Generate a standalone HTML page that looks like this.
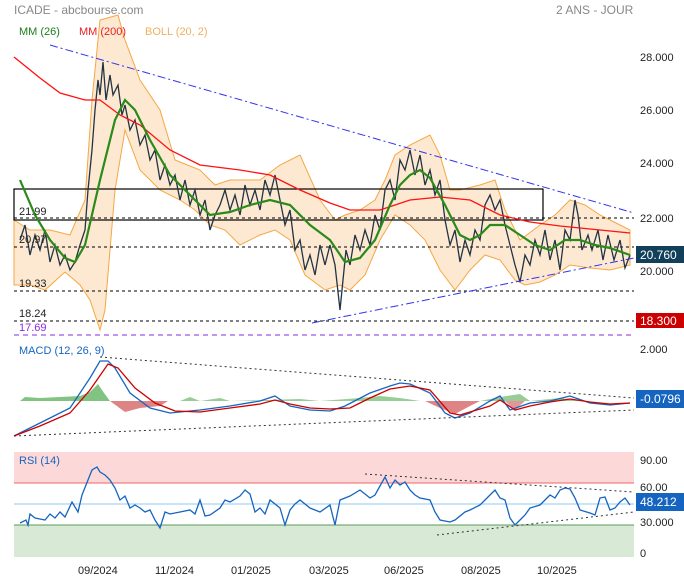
<!DOCTYPE html>
<html><head><meta charset="utf-8"><style>
body{margin:0;background:#fff;width:684px;height:580px;overflow:hidden;font-family:"Liberation Sans",sans-serif}
svg text{font-family:"Liberation Sans",sans-serif}
</style></head><body>
<svg width="684" height="580" xmlns="http://www.w3.org/2000/svg">
<text x="14" y="14" font-size="12" fill="#888">ICADE - abcbourse.com</text>
<text x="556" y="14" font-size="12" fill="#888">2 ANS - JOUR</text>
<!-- bollinger -->
<polygon fill="#fde9d2" stroke="#f5a742" stroke-width="1" points="14,220 30,230 50,230 70,235 85,200 92,100 100,20 118,15 125,40 140,80 160,110 175,160 200,170 215,185 230,180 260,180 280,165 300,155 320,200 335,220 345,215 360,210 375,200 385,180 395,155 410,145 430,135 440,155 450,190 460,190 480,185 495,180 505,210 520,240 540,225 555,215 570,200 585,205 600,215 620,225 630,230 630,265 610,270 590,268 570,265 555,275 540,282 525,285 515,280 500,260 485,255 470,270 455,290 440,270 425,240 410,225 395,215 380,240 365,275 350,290 340,285 325,290 305,275 290,240 275,230 260,235 240,245 225,230 210,225 195,210 180,200 160,190 140,170 125,130 115,190 105,310 100,330 90,300 80,285 65,272 45,290 30,285 14,285"/>
<rect x="14" y="189" width="529" height="31" fill="none" stroke="#000" stroke-width="1.2"/>
<g stroke="#000" stroke-dasharray="3,3" stroke-width="1">
<line x1="14" y1="218" x2="634" y2="218"/><line x1="14" y1="247" x2="634" y2="247"/>
<line x1="14" y1="291" x2="634" y2="291"/><line x1="14" y1="321" x2="634" y2="321"/></g>
<line x1="14" y1="335" x2="634" y2="335" stroke="#8a2be2" stroke-dasharray="5,4"/>
<!-- price -->
<polyline fill="none" stroke="#234" stroke-width="1.3" points="20,240 25,225 30,255 35,235 40,250 45,230 50,262 55,245 60,265 65,255 70,270 75,262 80,245 85,230 88,190 92,150 95,110 98,80 100,95 103,62 106,100 110,75 113,95 118,85 122,115 125,105 130,130 135,120 140,145 145,135 150,160 155,150 160,180 165,165 170,185 175,175 180,200 185,180 190,205 195,190 200,215 205,200 210,230 215,215 220,205 225,190 230,210 235,195 240,215 245,185 250,205 255,190 260,210 265,180 270,195 275,175 280,200 285,225 290,210 295,250 300,240 305,270 310,255 315,275 320,245 325,265 330,245 335,265 340,310 343,280 346,250 350,265 355,235 360,250 365,230 370,245 375,215 380,230 385,190 390,180 395,200 400,160 405,170 410,150 415,175 420,155 425,185 430,170 435,195 440,180 445,220 450,245 455,230 460,262 465,240 470,255 475,230 480,240 485,205 490,195 495,210 500,200 505,225 510,245 515,265 520,282 525,255 530,265 535,240 540,255 545,230 550,260 555,240 560,270 565,230 570,240 575,200 578,215 582,250 588,235 592,250 598,230 603,260 608,235 614,260 620,240 625,268 630,255"/>
<polyline fill="none" stroke="#f11" stroke-width="1.3" points="14,57 40,78 60,93 85,100 100,100 120,115 140,125 170,150 200,165 240,170 270,175 300,190 330,203 350,210 380,210 410,200 440,197 470,200 500,215 530,222 560,226 600,230 630,233"/>
<polyline fill="none" stroke="#2a8a1a" stroke-width="2.2" points="20,180 35,215 50,240 65,258 75,262 85,245 100,180 115,120 125,100 135,110 150,140 170,175 190,195 210,215 230,212 250,205 270,200 290,205 310,225 330,240 345,262 360,258 375,240 390,205 400,185 410,175 420,170 430,178 445,205 460,235 470,240 480,235 490,225 505,225 520,235 535,245 550,250 565,240 580,240 595,245 610,248 630,255"/>
<g stroke="#33e" stroke-width="1" stroke-dasharray="8,3,2,3" fill="none">
<line x1="50" y1="45" x2="634" y2="213"/><line x1="312" y1="323" x2="634" y2="258"/></g>
<text x="19" y="35" font-size="11" fill="#1a7f1a">MM (26)</text>
<text x="79" y="35" font-size="11" fill="#e82020">MM (200)</text>
<text x="145" y="35" font-size="11" fill="#f0b060">BOLL (20, 2)</text>
<g font-size="11" fill="#222">
<text x="19" y="215">21.99</text><text x="19" y="243">20.97</text><text x="19" y="287">19.33</text><text x="19" y="317">18.24</text></g>
<text x="19" y="331" font-size="11" fill="#8a2be2">17.69</text>
<g font-size="11" fill="#222"><text x="640" y="61">28.000</text><text x="640" y="114">26.000</text><text x="640" y="167">24.000</text><text x="640" y="222">22.000</text><text x="640" y="275">20.000</text><text x="640" y="353">2.000</text>
<text x="640" y="464">90.00</text><text x="640" y="491">60.00</text><text x="640" y="526">30.000</text><text x="640" y="557">0</text></g>
<rect x="636" y="246" width="48" height="17" fill="#123f5a"/><text x="640" y="259" font-size="12" fill="#fff">20.760</text>
<rect x="636" y="313" width="48" height="15" fill="#c00"/><text x="640" y="325" font-size="12" fill="#fff">18.300</text>
<!-- MACD -->
<text x="19" y="354" font-size="11" fill="#1565c0">MACD (12, 26, 9)</text>
<g transform="translate(0,28)">
<polygon fill="#6cb86c" opacity="0.85" points="20,373 25,369 40,370 60,369 80,368 90,364 98,356 104,365 110,373"/>
<polygon fill="#d05050" opacity="0.7" points="110,373 125,384 140,380 160,378 168,373"/>
<polygon fill="#6cb86c" opacity="0.7" points="180,373 190,369 200,373 220,370 230,373 300,371 320,373 360,370 380,368 400,370 420,373"/>
<polygon fill="#d05050" opacity="0.7" points="425,373 440,380 455,386 470,378 480,373"/>
<polygon fill="#6cb86c" opacity="0.7" points="480,373 500,369 520,366 530,373 560,370 580,373 634,373"/>
<polygon fill="#d05050" opacity="0.6" points="505,373 515,382 525,373"/>
<polyline fill="none" stroke="#1565c0" stroke-width="1.3" points="14,408 40,395 70,380 90,350 100,333 108,333 115,340 130,365 150,380 170,385 200,382 230,378 260,373 275,368 290,378 310,382 330,383 345,378 370,365 390,358 400,355 410,356 430,365 445,385 455,390 470,385 490,373 500,368 510,382 530,375 550,373 570,368 590,375 610,377 630,375"/>
<polyline fill="none" stroke="#c00" stroke-width="1.3" points="14,408 40,398 70,385 90,362 108,336 118,340 135,360 155,375 175,383 200,384 230,380 260,376 275,372 290,376 310,380 330,381 350,380 370,370 390,361 410,358 430,362 450,385 460,387 490,378 500,372 515,382 530,378 550,374 570,371 590,374 610,376 630,375"/>
<g stroke="#333" stroke-dasharray="2,3" fill="none"><line x1="100" y1="329" x2="634" y2="370"/><line x1="14" y1="408" x2="634" y2="382"/></g>
</g>
<rect x="636" y="390" width="48" height="18" fill="#1565c0"/><text x="640" y="403" font-size="12" fill="#fff">-0.0796</text>
<!-- RSI -->
<rect x="14" y="452" width="620" height="31" fill="#fdd8d8"/>
<rect x="14" y="525" width="620" height="32" fill="#d8ead6"/>
<line x1="14" y1="483" x2="634" y2="483" stroke="#e66" />
<line x1="14" y1="504" x2="634" y2="504" stroke="#8cc8f5"/>
<line x1="14" y1="525" x2="634" y2="525" stroke="#5a9a5a"/>
<text x="19" y="464" font-size="11" fill="#1565c0">RSI (14)</text>
<polyline fill="none" stroke="#1565c0" stroke-width="1.3" points="20,523 26,520 28,525 30,514 35,518 40,519 45,520 50,514 55,518 60,512 65,517 72,502 78,512 82,495 88,480 92,470 97,467 100,472 105,475 110,480 115,488 120,500 125,496 130,508 135,505 140,508 145,512 150,510 155,520 160,528 165,512 170,514 180,512 190,510 195,514 200,500 205,516 210,515 220,508 225,500 230,502 240,496 245,490 250,494 255,512 260,508 265,514 270,500 280,508 285,525 290,510 295,504 300,500 310,508 320,512 330,505 335,525 340,500 350,496 360,490 370,498 375,495 385,477 390,488 395,480 400,485 405,482 410,490 415,495 420,498 430,500 435,512 440,520 450,522 455,520 465,512 470,510 480,505 485,500 490,495 495,490 500,498 505,500 510,518 515,525 520,520 525,515 530,508 540,505 550,495 555,498 560,490 565,488 570,489 575,498 580,510 590,513 595,515 600,498 605,497 610,510 615,508 620,502 625,498 630,505"/>
<g stroke="#333" stroke-dasharray="2,3" fill="none"><line x1="365" y1="474" x2="634" y2="492"/><line x1="437" y1="535" x2="634" y2="512"/></g>
<rect x="636" y="493" width="48" height="18" fill="#1565c0"/><text x="640" y="506" font-size="12" fill="#fff">48.212</text>
<g font-size="11" fill="#222"><text x="78" y="574">09/2024</text><text x="155" y="574">11/2024</text><text x="231" y="574">01/2025</text><text x="309" y="574">03/2025</text><text x="384" y="574">06/2025</text><text x="461" y="574">08/2025</text><text x="537" y="574">10/2025</text></g>
</svg>
</body></html>
